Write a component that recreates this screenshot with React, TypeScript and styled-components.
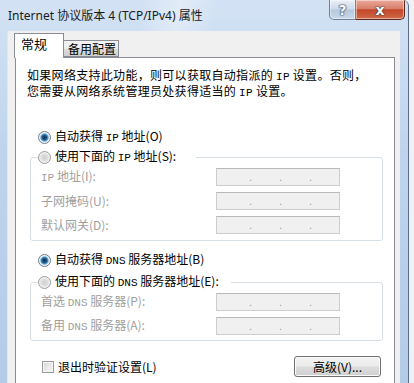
import React from 'react';
import styled, { createGlobalStyle } from 'styled-components';

const GlobalStyle = createGlobalStyle`
  html, body {
    margin: 0;
    padding: 0;
    background: #eef2f7;
  }
  body {
    width: 414px;
    height: 383px;
    overflow: hidden;
    font-family: "Noto Sans CJK SC", "Noto Sans", sans-serif;
  }
`;

const Window = styled.div`
  width: 409px;
  height: 383px;
  display: flex;
  flex-direction: column;
  background:
    linear-gradient(100deg, rgba(255, 255, 255, 0) 30%, rgba(255, 255, 255, 0.35) 38%, rgba(255, 255, 255, 0) 46%),
    linear-gradient(180deg, #d3e2f4 0%, #bfd4ec 40%, #b4cbe7 100%);
  border-right: 1px solid #5a6e88;
  border-top-right-radius: 6px;
  box-sizing: border-box;
  overflow: hidden;
`;

const TitleBar = styled.div`
  height: 31px;
  flex: none;
  display: flex;
  justify-content: space-between;
  align-items: flex-start;
`;

const Title = styled.div`
  padding: 8px 0 0 8px;
  font-family: "Noto Sans", "Noto Sans CJK SC", sans-serif;
  font-size: 12px;
  line-height: 16px;
  color: #1a1a1a;
`;

const Caption = styled.div`
  display: flex;
  margin-right: 3px;
`;

const CaptionButton = styled.div<{ $close?: boolean }>`
  width: ${p => (p.$close ? 49 : 27)}px;
  height: 20px;
  box-sizing: border-box;
  display: flex;
  align-items: center;
  justify-content: center;
  font-family: "DejaVu Sans", sans-serif;
  font-weight: bold;
  font-size: 14px;
  line-height: 14px;
  color: #fff;
  text-shadow: 0 0 2px #2b3b4f, 0 0 1px #2b3b4f, 0 0 1px #2b3b4f;
  border: 1px solid ${p => (p.$close ? '#5d2a22' : '#6f8097')};
  border-top: none;
  border-left: ${p => (p.$close ? 'none' : undefined)};
  border-radius: ${p => (p.$close ? '0 0 5px 0' : '0 0 0 5px')};
  background: ${p =>
    p.$close
      ? 'linear-gradient(180deg, #e9a99a 0%, #d9806b 45%, #c4472b 52%, #cf6a48 100%)'
      : 'linear-gradient(180deg, #e9eff7 0%, #ccdaea 48%, #b5c8de 52%, #cbd9ea 100%)'};
  box-shadow: inset 0 0 0 1px rgba(255, 255, 255, 0.45);
`;

const Client = styled.div`
  flex: 1;
  margin: 0 8px 0 7px;
  padding: 2px 5px 0 7px;
  background: #f0f0f0;
  display: flex;
  flex-direction: column;
  border-left: 1px solid #dfe8f2;
  box-sizing: border-box;
`;

const Tabs = styled.div`
  display: flex;
  align-items: flex-end;
  height: 24px;
  position: relative;
  z-index: 1;
  margin-left: -1px;
`;

const Tab = styled.div<{ $active?: boolean }>`
  box-sizing: border-box;
  height: ${p => (p.$active ? 25 : 17)}px;
  margin-bottom: ${p => (p.$active ? -1 : 0)}px;
  width: ${p => (p.$active ? 50 : 55)}px;
  padding-left: ${p => (p.$active ? 6 : 4)}px;
  border: 1px solid #898c95;
  border-bottom: ${p => (p.$active ? 'none' : '1px solid #898c95')};
  border-left: ${p => (p.$active ? '1px solid #898c95' : 'none')};
  background: ${p => (p.$active ? '#fff' : 'linear-gradient(180deg, #f3f3f3 0%, #ebebeb 50%, #dddddd 51%, #cfcfcf 100%)')};
  font-size: ${p => (p.$active ? 13 : 12)}px;
  line-height: ${p => (p.$active ? 20 : 15)}px;
  color: #000;
`;

const Panel = styled.div`
  flex: 1;
  background: #fff;
  border: 1px solid #898c95;
  border-bottom: none;
  display: flex;
  flex-direction: column;
  font-size: 12px;
  line-height: 14px;
  color: #000;
`;

const Latin = styled.span`
  font-family: "Liberation Mono", monospace;
  font-size: 11px;
`;

const Description = styled.p`
  margin: 10px 0 0 11px;
  white-space: pre;
  letter-spacing: 0.3px;
`;

const OptionRow = styled.label`
  display: flex;
  align-items: center;
  gap: 4px;
  height: 14px;
  white-space: pre;
`;

const TopOption = styled(OptionRow)<{ $top: number }>`
  margin: ${p => p.$top}px 0 0 22px;
`;

const Radio = styled.span<{ $checked?: boolean }>`
  width: 13px;
  height: 13px;
  box-sizing: border-box;
  border-radius: 50%;
  flex: none;
  border: 1px solid ${p => (p.$checked ? '#6f7c88' : '#9b9b9b')};
  background: ${p =>
    p.$checked
      ? 'radial-gradient(circle, #12314c 0, #1d4f7a 2px, #4c93c8 3.4px, #bcdaf2 4.3px, #f2f5f8 5px)'
      : 'radial-gradient(circle, #d2d2d2 0, #dcdcdc 3px, #efefef 5px, #f8f8f8 6px)'};
`;

const Group = styled.fieldset<{ $top: number; $bottom: number }>`
  margin: ${p => p.$top}px 11px 0 14px;
  padding: 4px 10px ${p => p.$bottom}px 10px;
  border: 1px solid #d5dfe5;
  border-radius: 3px;
  min-width: 0;
`;

const Legend = styled.legend<{ $gap: number }>`
  margin-left: -3px;
  padding: 0 ${p => p.$gap}px 0 0;
  font-size: 12px;
  line-height: 14px;
`;

const Fields = styled.div`
  display: grid;
  grid-template-columns: 175px 124px;
  row-gap: 6px;
  align-items: center;
`;

const FieldLabel = styled.span`
  color: #a0a0a0;
  white-space: pre;
`;

const AddressBox = styled.div`
  height: 18px;
  box-sizing: border-box;
  border: 1px solid #cdcdcd;
  border-top-color: #b9b9b9;
  background: #f0f0f0;
  display: flex;
  align-items: flex-end;
  padding: 0 0 2px 5px;
`;

const Octet = styled.span`
  width: 30px;
  text-align: right;
  color: #9a9a9a;
  font-family: "Liberation Sans", sans-serif;
  font-size: 11px;
  line-height: 11px;
`;

const Footer = styled.div`
  margin: 15px 13px 0 26px;
  display: flex;
  justify-content: space-between;
  align-items: center;
`;

const Checkbox = styled.span`
  width: 12px;
  height: 12px;
  box-sizing: border-box;
  border: 1px solid #9a9a9a;
  background: linear-gradient(135deg, #d6d6d6 0%, #ececec 60%, #f6f6f6 100%);
  box-shadow: inset 0 0 0 1px #f4f4f4;
  flex: none;
`;

const Button = styled.button`
  width: 87px;
  height: 21px;
  box-sizing: border-box;
  border: 1px solid #707070;
  border-radius: 3px;
  background: linear-gradient(180deg, #f3f3f3 0%, #ebebeb 48%, #dddddd 52%, #cfcfcf 100%);
  box-shadow: inset 0 0 0 1px #fbfbfb;
  font-family: "Noto Sans CJK SC", sans-serif;
  font-size: 12px;
  line-height: 14px;
  color: #000;
  padding: 0;
`;

const AddressField = () => (
  <AddressBox>
    <Octet>.</Octet>
    <Octet>.</Octet>
    <Octet>.</Octet>
  </AddressBox>
);

const App: React.FC = () => {
  const ipFields = [
    <>
      <Latin>IP</Latin> 地址(I):
    </>,
    <>子网掩码(U):</>,
    <>默认网关(D):</>,
  ];
  const dnsFields = [
    <>
      首选 <Latin>DNS</Latin> 服务器(P):
    </>,
    <>
      备用 <Latin>DNS</Latin> 服务器(A):
    </>,
  ];

  return (
    <>
      <GlobalStyle />
      <Window>
        <TitleBar>
          <Title>Internet 协议版本 4 (TCP/IPv4) 属性</Title>
          <Caption>
            <CaptionButton>?</CaptionButton>
            <CaptionButton $close>x</CaptionButton>
          </Caption>
        </TitleBar>
        <Client>
          <Tabs>
            <Tab $active>常规</Tab>
            <Tab>备用配置</Tab>
          </Tabs>
          <Panel>
            <Description>
              如果网络支持此功能，则可以获取自动指派的 <Latin>IP</Latin> 设置。否则，
              {'\n'}
              您需要从网络系统管理员处获得适当的 <Latin>IP</Latin> 设置。
            </Description>

            <TopOption $top={30}>
              <Radio $checked />
              <span>
                自动获得 <Latin>IP</Latin> 地址(O)
              </span>
            </TopOption>
            <Group $top={6} $bottom={6}>
              <Legend $gap={20}>
                <OptionRow>
                  <Radio />
                  <span>
                    使用下面的 <Latin>IP</Latin> 地址(S):
                  </span>
                </OptionRow>
              </Legend>
              <Fields>
                {ipFields.map((label, i) => (
                  <React.Fragment key={i}>
                    <FieldLabel>{label}</FieldLabel>
                    <AddressField />
                  </React.Fragment>
                ))}
              </Fields>
            </Group>

            <TopOption $top={12}>
              <Radio $checked />
              <span>
                自动获得 <Latin>DNS</Latin> 服务器地址(B)
              </span>
            </TopOption>
            <Group $top={8} $bottom={5}>
              <Legend $gap={12}>
                <OptionRow>
                  <Radio />
                  <span>
                    使用下面的 <Latin>DNS</Latin> 服务器地址(E):
                  </span>
                </OptionRow>
              </Legend>
              <Fields>
                {dnsFields.map((label, i) => (
                  <React.Fragment key={i}>
                    <FieldLabel>{label}</FieldLabel>
                    <AddressField />
                  </React.Fragment>
                ))}
              </Fields>
            </Group>

            <Footer>
              <OptionRow>
                <Checkbox />
                <span>退出时验证设置(L)</span>
              </OptionRow>
              <Button>高级(V)...</Button>
            </Footer>
          </Panel>
        </Client>
      </Window>
    </>
  );
};

export default App;
